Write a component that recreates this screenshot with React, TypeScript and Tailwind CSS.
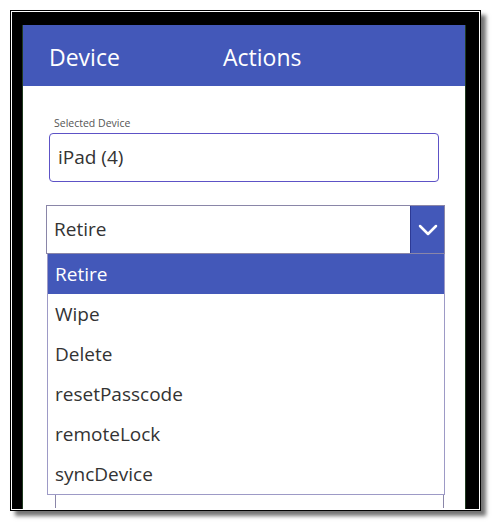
import React from 'react';

const ACTIONS = ['Retire', 'Wipe', 'Delete', 'resetPasscode', 'remoteLock', 'syncDevice'];

export default function App() {
  const selected = 'Retire';

  return (
    <div className="w-[492px] h-[522px] bg-white pt-[10px] pl-[10px]" style={{ fontFamily: '"Open Sans", "Noto Sans", sans-serif' }}>
      {/* Frame */}
      <div className="w-[471px] h-[501px] border border-black bg-white p-[1px] flex shadow-[5px_5px_4px_rgba(0,0,0,0.55)]">
        <div className="flex-1 bg-black pl-[10px] pr-[13px] pt-[13px] flex">
          <div className="w-[444px] bg-white flex flex-col border-l border-r border-[#1f3a1f]">
            {/* Header */}
            <header className="h-[61px] bg-[#4358b9] flex items-center text-white text-[23px] leading-none pt-[3px]">
              <span className="ml-[26px] w-[174px]">Device</span>
              <span>Actions</span>
            </header>

            {/* Body */}
            <div className="flex flex-col">
              <p className="mt-[30px] ml-[31px] text-[10.5px] leading-[14px] text-[#555]">Selected Device</p>
              <div className="mt-[3px] ml-[26px] w-[390px] h-[49px] border-[1.5px] border-[#5d52c6] rounded-[4px] flex items-center pl-[8px] text-[19px] text-[#333]">
                iPad (4)
              </div>

              {/* Dropdown */}
              <div className="mt-[23px] ml-[23px] w-[399px] h-[49px] border border-[#8a86a8] flex">
                <div className="flex-1 flex items-center pl-[7px] text-[19px] text-[#333]">{selected}</div>
                <div className="w-[34px] bg-[#4358b9] border-l border-[#2d3a95] flex items-center justify-center">
                  <svg width="20" height="12" viewBox="0 0 20 12" fill="none">
                    <polyline points="2,2 10,10 18,2" stroke="white" strokeWidth="2.5" strokeLinecap="round" strokeLinejoin="round" />
                  </svg>
                </div>
              </div>

              {/* Options */}
              <ul className="ml-[24px] w-[398px] border border-t-0 border-[#9d9ac6] flex flex-col">
                {ACTIONS.map((a) => (
                  <li
                    key={a}
                    className={`h-[40px] flex items-center pl-[7px] text-[19px] ${a === selected ? 'bg-[#4358b9] text-white' : 'text-[#333]'}`}
                  >
                    {a}
                  </li>
                ))}
              </ul>

              {/* Box behind the list */}
              <div className="ml-[32px] w-[389px] h-[13px] border-l border-r border-[#8a86a8]" />
            </div>
          </div>
        </div>
      </div>
    </div>
  );
}
